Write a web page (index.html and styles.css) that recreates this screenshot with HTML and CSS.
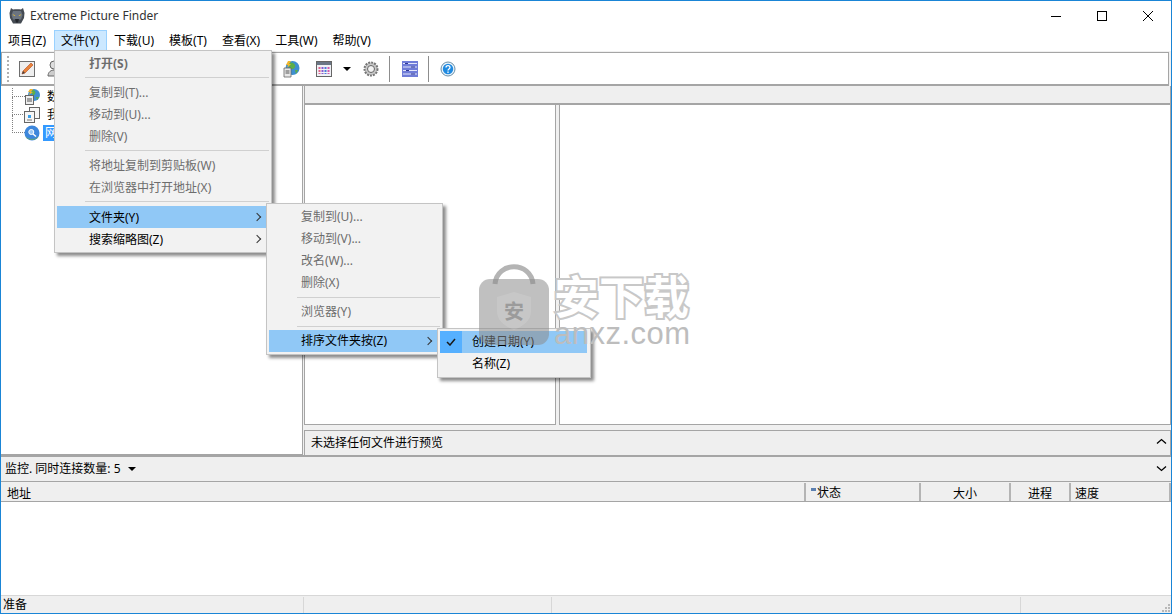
FILE: index.html
```html
<!DOCTYPE html>
<html lang="zh-CN">
<head>
    <meta charset="UTF-8">
    <title>Extreme Picture Finder</title>
    <link rel="stylesheet" href="styles.css">
</head>
<body>
<div class="window">
    <div class="titlebar">
        <svg class="app-icon" width="18" height="18" viewBox="0 0 18 18"><path d="M3 1l2 1.500C7 2 11 2 13 2.500L15 1l1.500 5-.5 5-3 5.500H5L2 11l-.5-5z" fill="#454b53"/><path d="M5 4h8l1.500 4-1.500 4.500H5L3.500 8z" fill="#6b7480"/><path d="M4.500 7l3 1.500-1.500.6zM13.500 7l-3 1.500 1.500.6z" fill="#e2b93a"/><path d="M7 12h4l-1 3.500H8z" fill="#23272c"/></svg>
        <span class="app-title">Extreme Picture Finder</span>
        <div class="win-buttons">
            <svg width="12" height="12" viewBox="0 0 12 12"><path d="M1 6.500h10" stroke="#000" fill="none"/></svg>
            <svg width="12" height="12" viewBox="0 0 12 12"><rect x="1.500" y="1.500" width="9" height="9" stroke="#000" fill="none"/></svg>
            <svg width="12" height="12" viewBox="0 0 12 12"><path d="M1 1l10 10M11 1L1 11" stroke="#000" fill="none"/></svg>
        </div>
    </div>

    <div class="menubar">
        <span class="menu-top">项目(Z)</span>
        <span class="menu-top menu-open">文件(Y)</span>
        <span class="menu-top">下载(U)</span>
        <span class="menu-top">模板(T)</span>
        <span class="menu-top">查看(X)</span>
        <span class="menu-top">工具(W)</span>
        <span class="menu-top">帮助(V)</span>
    </div>

    <div class="toolbar">
        <div class="grip"></div>
        <svg class="tool tool-pencil" width="18" height="18" viewBox="0 0 18 18"><rect x="1.500" y="1.500" width="15" height="15" fill="#eeeeee" stroke="#6e6e6e"/><path d="M4 14l1-3 8-8 2 2-8 8z" fill="#e8843a" stroke="#b8461e" stroke-width=".6"/><path d="M4 14l1-3 2 2z" fill="#444"/></svg>
        <svg class="tool tool-person" width="14" height="18" viewBox="0 0 14 18"><circle cx="7" cy="5" r="4" fill="#ddd" stroke="#666"/><path d="M1 16c0-4 3-6 6-6s6 2 6 6z" fill="#ccc" stroke="#666"/></svg>
        <svg class="tool tool-globe" width="18" height="18" viewBox="0 0 18 18"><circle cx="10.500" cy="8" r="7" fill="#3f8fd0"/><path d="M7 3c3-1 5 0 6 2s-1 4-3 4-4-2-3-6zM13 10l3 0-2 4z" fill="#5cae4a"/><path d="M6 1l3 0-2 3 2 0-4 4 1-3H4z" fill="#f1b52c"/><path d="M2 8h7v9H2z" fill="#e8e8e8" stroke="#666" stroke-width=".8"/><path d="M3.500 11h4M3.500 13h4" stroke="#555"/></svg>
        <svg class="tool tool-table" width="16" height="16" viewBox="0 0 16 16"><rect x=".5" y=".5" width="15" height="15" fill="#f0f1f6" stroke="#666"/><rect x="1" y="1" width="14" height="3" fill="#6a7686"/><path d="M3.500 6v7" stroke="#e0628a" stroke-width="2" stroke-dasharray="2 1"/><path d="M6.500 6v7" stroke="#8a5ad0" stroke-width="2" stroke-dasharray="2 1"/><path d="M9.500 6v7" stroke="#4a7ed8" stroke-width="2" stroke-dasharray="2 1"/><path d="M12.500 6v7" stroke="#d05ab0" stroke-width="2" stroke-dasharray="2 1"/></svg>
        <span class="tool-caret"></span>
        <svg class="tool tool-gear" width="16" height="16" viewBox="0 0 16 16"><circle cx="8" cy="8" r="6.500" fill="#c9c9c9" stroke="#777" stroke-width="2" stroke-dasharray="2 1"/><circle cx="8" cy="8" r="3.500" fill="#f2f2f2" stroke="#666"/></svg>
        <span class="tool-sep tool-sep-a"></span>
        <svg class="tool tool-options" width="16" height="16" viewBox="0 0 16 16"><rect width="16" height="16" fill="#6f7cd8"/><path d="M1 2.500h14M1 6h14M1 9.500h14M1 13h14" stroke="#e2e6fb"/><path d="M3 2.500h3M9 6h4M4 9.500h3M9 13h4" stroke="#2e3690"/></svg>
        <span class="tool-sep tool-sep-b"></span>
        <svg class="tool tool-help" width="16" height="16" viewBox="0 0 16 16"><circle cx="8" cy="8" r="7" fill="#e8f3fb" stroke="#6a8fa8"/><circle cx="8" cy="8" r="5.200" fill="#1f8ae0"/><path d="M6 6.500c0-2.500 4-2.500 4 0 0 1.500-2 1.500-2 3" stroke="#fff" stroke-width="1.300" fill="none"/><rect x="7.300" y="10.500" width="1.400" height="1.400" fill="#fff"/></svg>
    </div>

    <div class="workspace">
        <div class="tree">
            <div class="tree-row">
                <span class="branch branch-first"></span>
                <svg class="tree-icon" width="16" height="16" viewBox="0 0 16 16"><circle cx="10" cy="6" r="6" fill="#3f8fd0"/><path d="M8 1c3 0 4 2 3 4s-3 1-3-1zM12 8h3l-2 3z" fill="#5cae4a"/><path d="M6 0h3L7 3h2L5 6l1-3H4z" fill="#f1b52c"/><rect x="1.500" y="6.500" width="8" height="9" fill="#eee" stroke="#666"/><path d="M3 10h5M3 12h5" stroke="#555"/></svg>
                <span class="tree-label">数据库</span>
            </div>
            <div class="tree-row">
                <span class="branch"></span>
                <svg class="tree-icon" width="16" height="16" viewBox="0 0 16 16"><rect x="5.500" y=".5" width="10" height="11" fill="#f6f6f6" stroke="#666"/><rect x=".5" y="4.500" width="10" height="11" fill="#f6f6f6" stroke="#666"/><rect x="4" y="8" width="3" height="3" fill="#3aa0e8"/><path d="M3 13h5" stroke="#777"/></svg>
                <span class="tree-label">我的收藏</span>
            </div>
            <div class="tree-row">
                <span class="branch"></span>
                <svg class="tree-icon" width="16" height="16" viewBox="0 0 16 16"><circle cx="8" cy="8" r="7.500" fill="#3d87dc"/><path d="M1 11c2 4 12 4 14 0-2 5-12 5-14 0z" fill="#6fae52"/><circle cx="7.300" cy="7" r="2.500" fill="#9cc8f4" stroke="#fff"/><path d="M9 9l3 2.500" stroke="#fff" stroke-width="1.500"/></svg>
                <span class="tree-label tree-selected">网络搜索</span>
            </div>
        </div>

        <div class="preview">
            <div class="preview-head"></div>
            <div class="preview-panes">
                <div class="pane-thumbs"></div>
                <div class="pane-view"></div>
            </div>
            <div class="preview-bar">
                <span>未选择任何文件进行预览</span>
                <svg width="11" height="7" viewBox="0 0 11 7"><path d="M1 5.500l4.500-4 4.500 4" stroke="#000" stroke-width="1.300" fill="none"/></svg>
            </div>
        </div>
    </div>

    <div class="monitor">
        <span>监控. 同时连接数量: 5</span>
        <span class="monitor-caret"></span>
        <svg class="monitor-toggle" width="11" height="7" viewBox="0 0 11 7"><path d="M1 1.500l4.500 4 4.500-4" stroke="#000" stroke-width="1.300" fill="none"/></svg>
    </div>

    <div class="list-head">
        <span class="col col-url">地址</span>
        <span class="col col-state"><i class="state-mark"></i>状态</span>
        <span class="col col-size">大小</span>
        <span class="col col-progress">进程</span>
        <span class="col col-speed">速度</span>
    </div>
    <div class="list-body"></div>

    <div class="statusbar">
        <span class="status status-a">准备</span>
        <span class="status status-b"></span>
        <span class="status status-c"></span>
        <span class="status status-d">
            <svg class="size-grip" width="10" height="10" viewBox="0 0 10 10"><path d="M7 1h2v2H7zM4 4h2v2H4zM7 4h2v2H7zM1 7h2v2H1zM4 7h2v2H4zM7 7h2v2H7z" fill="#b8b8b8"/></svg>
        </span>
    </div>

    <div class="menu menu-file">
        <div class="item disabled bold">打开(S)</div>
        <div class="sep"></div>
        <div class="item disabled">复制到(T)...</div>
        <div class="item disabled">移动到(U)...</div>
        <div class="item disabled">删除(V)</div>
        <div class="sep"></div>
        <div class="item disabled">将地址复制到剪贴板(W)</div>
        <div class="item disabled">在浏览器中打开地址(X)</div>
        <div class="sep sep-wide"></div>
        <div class="item hot has-sub">文件夹(Y)</div>
        <div class="item has-sub">搜索缩略图(Z)</div>
    </div>

    <div class="menu menu-folder">
        <div class="item disabled">复制到(U)...</div>
        <div class="item disabled">移动到(V)...</div>
        <div class="item disabled">改名(W)...</div>
        <div class="item disabled">删除(X)</div>
        <div class="sep"></div>
        <div class="item disabled">浏览器(Y)</div>
        <div class="sep"></div>
        <div class="item hot has-sub">排序文件夹按(Z)</div>
    </div>

    <div class="menu menu-sort">
        <div class="item hot checked">
            <span class="check-box"><svg width="10" height="8" viewBox="0 0 10 8"><path d="M1 4l3 3 5-6" stroke="#1a1a1a" stroke-width="1.500" fill="none"/></svg></span>
            创建日期(Y)
        </div>
        <div class="item">名称(Z)</div>
    </div>

    <div class="watermark">
        <svg width="72" height="82" viewBox="0 0 72 82"><path d="M17 20C19 -3 53 -3 55 20" fill="none" stroke="#b4b4b4" stroke-width="5"/><rect x="1" y="15" width="70" height="66" rx="11" fill="#8c8c8c" fill-opacity=".55"/><path d="M36 28l17 5v14c0 10-8 15-17 19-9-4-17-9-17-19V33z" fill="#fff" fill-opacity=".12"/><text x="36" y="55" text-anchor="middle" class="mark-shield">安</text></svg>
        <div class="mark-text">
            <div class="mark-cn">安下载</div>
            <div class="mark-en">anxz.com</div>
        </div>
    </div>
</div>
</body>
</html>
```

FILE: styles.css
```css
* {
    box-sizing: border-box;
}
html, body {
    margin: 0;
    padding: 0;
}
body {
    font-family: "Noto Sans", "Noto Sans CJK SC", sans-serif;
    font-size: 12px;
    color: #000;
    background-color: #fff;
}
.window {
    position: relative;
    width: 1172px;
    height: 614px;
    overflow: hidden;
    display: flex;
    flex-direction: column;
    border: 1px solid #1a85d6;
    background-color: #f0f0f0;
}

/* title + menu */
.titlebar {
    height: 29px;
    flex: none;
    display: flex;
    align-items: center;
    padding-left: 7px;
    background-color: #fff;
}
.app-title {
    margin-left: 4px;
    color: #333;
}
.win-buttons {
    margin-left: auto;
    display: flex;
    gap: 34px;
    padding-right: 17px;
}
.menubar {
    height: 21px;
    flex: none;
    display: flex;
    background-color: #fff;
}
.menu-top {
    padding: 0 7px 0 6px;
    line-height: 22px;
    border: 1px solid transparent;
    border-top: 0;
    border-bottom: 0;
}
.menu-open {
    background-color: #cce8ff;
    border: 1px solid #99d1ff;
    line-height: 20px;
}

/* toolbar */
.toolbar {
    height: 34px;
    margin-top: 1px;
    margin-right: 2px;
    flex: none;
    display: flex;
    align-items: center;
    background-color: #fff;
    border: 1px solid #a5a5a5;
    border-bottom-width: 2px;
    padding-left: 5px;
}
.grip {
    width: 2px;
    height: 26px;
    border-left: 2px dotted #b0b0b0;
}
.tool {
    flex: none;
}
.tool-pencil {
    margin-left: 9px;
}
.tool-person {
    margin-left: 11px;
}
.tool-globe {
    margin-left: 221px;
}
.tool-table {
    margin-left: 16px;
}
.tool-caret {
    width: 0;
    height: 0;
    margin-left: 11px;
    border: 4px solid transparent;
    border-top: 4px solid #000;
    border-bottom: 0;
}
.tool-gear {
    margin-left: 12px;
}
.tool-sep {
    width: 1px;
    height: 26px;
    background-color: #8d8d8d;
}
.tool-sep-a {
    margin-left: 10px;
}
.tool-options {
    margin-left: 12px;
}
.tool-sep-b {
    margin-left: 10px;
}
.tool-help {
    margin-left: 11px;
}

/* main area */
.workspace {
    height: 369px;
    flex: none;
    display: flex;
    gap: 1px;
}
.tree {
    width: 302px;
    flex: none;
    padding-top: 2px;
    background-color: #fff;
    border: 1px solid #a5a5a5;
    border-top: 0;
    border-left: 0;
    overflow: hidden;
}
.tree-row {
    height: 18px;
    display: flex;
    align-items: center;
}
.branch {
    width: 13px;
    height: 18px;
    margin-left: 11px;
    margin-top: -18px;
    border-left: 1px dotted #808080;
    border-bottom: 1px dotted #808080;
    flex: none;
}
.branch-first {
    height: 9px;
    margin-top: -9px;
}
.tree-icon {
    flex: none;
    margin-left: -1px;
}
.tree-label {
    margin-left: 5px;
    padding: 0 2px;
    white-space: nowrap;
    line-height: 16px;
}
.tree-selected {
    margin-left: 3px;
    background-color: #3399ff;
    color: #fff;
}
.preview {
    width: 868px;
    flex: none;
    display: flex;
    flex-direction: column;
    padding-right: 1px;
}
.preview-head {
    height: 19px;
    flex: none;
    background-color: #efefef;
    border: 1px solid #a5a5a5;
    border-top: 0;
    border-bottom-width: 2px;
}
.preview-panes {
    height: 320px;
    flex: none;
    display: flex;
    gap: 3px;
}
.pane-thumbs {
    width: 252px;
    flex: none;
    background-color: #fff;
    border: 1px solid #a5a5a5;
    border-top: 0;
}
.pane-view {
    flex: 1;
    background-color: #fff;
    border: 1px solid #a5a5a5;
    border-top: 0;
}
.preview-bar {
    height: 25px;
    margin-top: 5px;
    flex: none;
    display: flex;
    align-items: center;
    justify-content: space-between;
    padding: 0 3px 3px 6px;
    background-color: #efefef;
    border: 1px solid #a5a5a5;
    border-bottom: 0;
}

/* monitor strip */
.monitor {
    height: 27px;
    flex: none;
    display: flex;
    align-items: center;
    padding: 0 4px 2px;
    background-color: #efefef;
    border-top: 2px solid #a5a5a5;
    border-bottom: 1px solid #a5a5a5;
}
.monitor-caret {
    width: 0;
    height: 0;
    margin-left: 7px;
    margin-top: 2px;
    border: 4px solid transparent;
    border-top: 4px solid #000;
    border-bottom: 0;
}
.monitor-toggle {
    margin-left: auto;
}
.list-head {
    height: 19px;
    margin-top: 1px;
    flex: none;
    display: flex;
    background-color: #efefef;
    border-bottom: 1px solid #a5a5a5;
}
.col {
    line-height: 22px;
    height: 18px;
    border-right: 2px solid #b4b4b4;
    white-space: nowrap;
}
.col-url {
    width: 805px;
    padding-left: 6px;
}
.col-state {
    width: 115px;
    padding-left: 5px;
    padding-top: 2px;
    display: flex;
    align-items: center;
}
.state-mark {
    width: 5px;
    height: 3px;
    margin: 0 1px 8px 0;
    background-color: #5b7fb0;
}
.col-size {
    width: 90px;
    text-align: center;
}
.col-progress {
    width: 60px;
    text-align: center;
}
.col-speed {
    flex: 1;
    padding-left: 4px;
}
.list-body {
    height: 93px;
    flex: none;
    background-color: #fff;
}

/* status */
.statusbar {
    flex: 1;
    display: flex;
    background-color: #efefef;
    border-top: 1px solid #d7d7d7;
}
.status {
    line-height: 16px;
    border-right: 1px solid #d7d7d7;
    margin: 1px 0 0;
}
.status-a {
    width: 303px;
    padding-left: 2px;
}
.status-b {
    width: 248px;
}
.status-c {
    width: 469px;
}
.status-d {
    flex: 1;
    border-right: 0;
    display: flex;
    justify-content: flex-end;
    align-items: flex-end;
}

/* popup menus */
.menu {
    position: absolute;
    background-color: #f2f2f2;
    border: 1px solid #c4c4c4;
    padding: 0 2px;
    box-shadow: 3px 3px 3px rgba(0, 0, 0, 0.45);
}
.menu-file {
    left: 53px;
    top: 49px;
    width: 218px;
    height: 203px;
    padding-top: 1px;
}
.menu-file .item {
    line-height: 24px;
}
.menu-folder {
    left: 265px;
    top: 202px;
    width: 177px;
    height: 152px;
    padding-top: 2px;
}
.menu-sort {
    left: 436px;
    top: 327px;
    width: 154px;
    height: 50px;
    padding: 2px 3px 0 2px;
}
.menu-sort .item {
    line-height: 21px;
}
.item {
    height: 22px;
    line-height: 22px;
    white-space: nowrap;
    position: relative;
    padding-left: 32px;
}
.disabled {
    color: #6d6d6d;
}
.bold {
    font-weight: bold;
}
.hot {
    background-color: #90c8f6;
}
.has-sub::after {
    content: "";
    position: absolute;
    right: 9px;
    top: 8px;
    width: 5px;
    height: 5px;
    border-top: 1px solid #333;
    border-right: 1px solid #333;
    transform: rotate(45deg);
}
.sep {
    height: 7px;
    margin-left: 28px;
    padding-top: 3px;
}
.sep-wide {
    height: 8px;
}
.sep::before {
    content: "";
    display: block;
    height: 1px;
    background-color: #d0d0d0;
}
.check-box {
    position: absolute;
    left: 0;
    top: 0;
    width: 22px;
    height: 22px;
    display: flex;
    align-items: center;
    justify-content: center;
    background-color: #56b0ff;
}

/* watermark lies over the menus */
.watermark {
    position: absolute;
    left: 477px;
    top: 263px;
    display: flex;
    gap: 4px;
    pointer-events: none;
}
.mark-shield {
    font-size: 20px;
    font-weight: bold;
    fill: #9b9b9b;
}
.mark-text {
    padding-top: 12px;
    font-family: "Liberation Sans", "Noto Sans CJK SC", sans-serif;
}
.mark-cn {
    font-size: 45px;
    line-height: 46px;
    font-weight: bold;
    color: #fff;
    -webkit-text-stroke: 4px #c8c8c8;
    paint-order: stroke fill;
}
.mark-en {
    font-size: 31px;
    line-height: 24px;
    letter-spacing: 0.5px;
    color: #bdbdbd;
}
```
